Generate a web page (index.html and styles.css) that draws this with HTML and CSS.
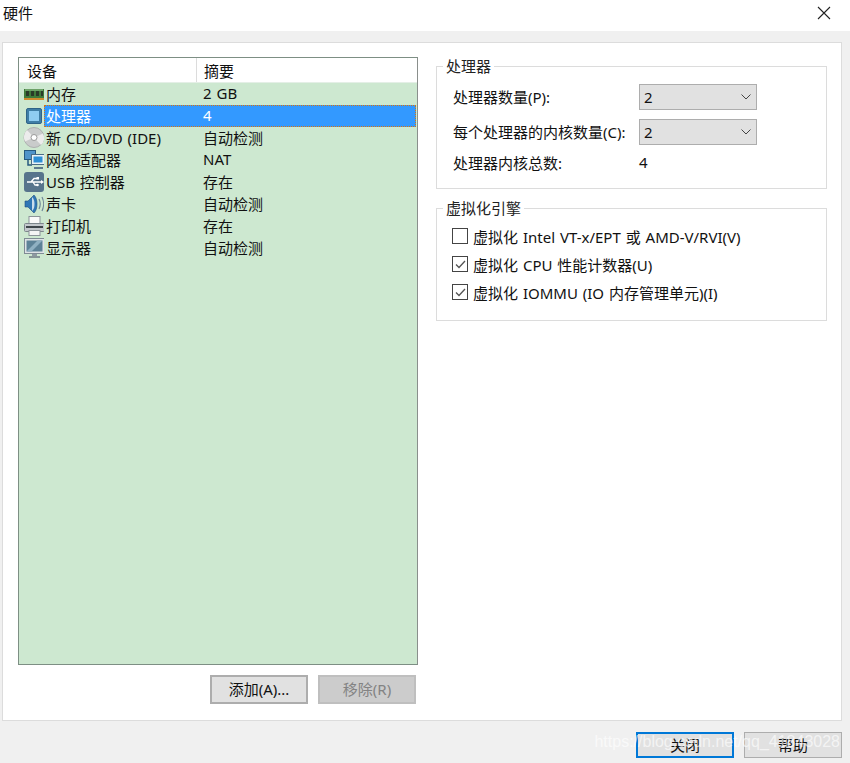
FILE: index.html
```html
<!DOCTYPE html>
<html lang="zh-CN">
<head>
    <meta charset="UTF-8">
    <title>硬件</title>
    <link rel="stylesheet" href="styles.css">
</head>
<body>
    <div class="window">
        <div class="titlebar">
            <span class="title">硬件</span>
            <svg class="close-x" width="14" height="14" viewBox="0 0 14 14"><path d="M1 1l12 12M13 1L1 13" stroke="#222" stroke-width="1.1" fill="none"/></svg>
        </div>

        <div class="content">
            <div class="panel">
                <!-- 左侧设备列表 -->
                <div class="left">
                    <div class="list">
                        <div class="list-head">
                            <div class="col-device">设备</div>
                            <div class="col-summary">摘要</div>
                        </div>
                        <div class="row">
                            <svg class="icon" viewBox="-2 0 24 22"><rect x="2" y="6" width="20" height="9" fill="#3f7a3a"/><path d="M4 8h3v5H4zM9 8h3v5H9zM14 8h3v5h-3zM19 8h2v5h-2z" fill="#2a3a28"/><path d="M3 7h18" stroke="#9cc896"/><rect x="2" y="15" width="20" height="2" fill="#d08a2e"/></svg>
                            <div class="col-device">内存</div>
                            <div class="col-summary">2 GB</div>
                        </div>
                        <div class="row selected">
                            <svg class="icon" viewBox="-2 0 24 22"><rect x="4.500" y="3.500" width="15" height="15" rx="1.500" fill="#3f7ea6" stroke="#2f6488"/><rect x="7" y="6" width="10" height="10" fill="#8fcdf2"/></svg>
                            <div class="sel-area">
                                <div class="col-device">处理器</div>
                                <div class="col-summary">4</div>
                            </div>
                        </div>
                        <div class="row">
                            <svg class="icon" viewBox="-2 0 24 22"><circle cx="12" cy="10.500" r="10" fill="#c9cbcb" stroke="#adafaf"/><path d="M12 10.500L5 3A10 10 0 0 0 3 14.500zM12 10.500l7 7.500A10 10 0 0 0 21 6.500z" fill="#ececec"/><circle cx="12" cy="10.500" r="3" fill="#fff" stroke="#999"/></svg>
                            <div class="col-device">新 CD/DVD (IDE)</div>
                            <div class="col-summary">自动检测</div>
                        </div>
                        <div class="row">
                            <svg class="icon" viewBox="-2 0 24 22"><rect x="2.500" y="1.500" width="11" height="9" fill="#4f93c9" stroke="#27597f"/><path d="M6 11v5h4" stroke="#27597f" fill="none" stroke-width="1.500"/><rect x="9.500" y="5.500" width="13" height="10" fill="#e9f2f7" stroke="#4a6d85"/><rect x="11.500" y="7.500" width="9" height="6" fill="#2d8fd5"/><path d="M12 19h9" stroke="#5b7a8e" stroke-width="2"/></svg>
                            <div class="col-device">网络适配器</div>
                            <div class="col-summary">NAT</div>
                        </div>
                        <div class="row">
                            <svg class="icon" viewBox="-2 0 24 22"><rect x="2" y="1" width="20" height="20" rx="3" fill="#57748c"/><path d="M5 11h14M9 11l3-3.500h3M11 11l2 3h2" stroke="#fff" stroke-width="1.300" fill="none"/><path d="M19 9l3 2-3 2z" fill="#fff"/><rect x="14.500" y="6" width="2.500" height="2.500" fill="#fff"/><circle cx="15.500" cy="14" r="1.300" fill="#fff"/></svg>
                            <div class="col-device">USB 控制器</div>
                            <div class="col-summary">存在</div>
                        </div>
                        <div class="row">
                            <svg class="icon" viewBox="-2 0 24 22"><path d="M3 8h3l6-6c2 2 3 5 3 9s-1 7-3 9l-6-6H3z" fill="#2f76b5" stroke="#1f4f7d" stroke-width=".6"/><path d="M10 4c2 2 2.500 4 2.500 7s-.5 5-2.500 7" fill="#c9dcec"/><path d="M17 6c1.500 3 1.500 7 0 10M20 4c2 4 2 10 0 14" stroke="#6f8799" stroke-width="1.200" fill="none"/></svg>
                            <div class="col-device">声卡</div>
                            <div class="col-summary">自动检测</div>
                        </div>
                        <div class="row">
                            <svg class="icon" viewBox="-2 0 24 22"><rect x="7" y="1.500" width="11" height="7" fill="#fafafa" stroke="#8c9499"/><rect x="2.500" y="8.500" width="20" height="8" rx="1" fill="#c3c8cc" stroke="#7d868c"/><rect x="4" y="11" width="17" height="2" fill="#3f464b"/><rect x="7" y="15.500" width="11" height="5" fill="#f4f4f4" stroke="#8c9499"/></svg>
                            <div class="col-device">打印机</div>
                            <div class="col-summary">存在</div>
                        </div>
                        <div class="row">
                            <svg class="icon" viewBox="-2 0 24 22"><rect x="2.500" y="1.500" width="20" height="15" fill="#dfe3e6" stroke="#7f8b94"/><path d="M4.500 3.500h16v11h-16z" fill="#5d8297"/><path d="M4.500 14.500l11-11h5l-11 11z" fill="#8fb0c2"/><path d="M10 17h5v2h-5z" fill="#8f9aa2"/><path d="M7 20h11" stroke="#6f7b84" stroke-width="1.500"/></svg>
                            <div class="col-device">显示器</div>
                            <div class="col-summary">自动检测</div>
                        </div>
                    </div>
                    <div class="list-buttons">
                        <div class="btn">添加(A)...</div>
                        <div class="btn btn-disabled">移除(R)</div>
                    </div>
                </div>

                <!-- 右侧设置 -->
                <div class="right">
                    <fieldset class="group group-cpu">
                        <legend>处理器</legend>
                        <div class="group-body">
                            <div class="field">
                                <span class="field-label">处理器数量(P):</span>
                                <div class="combo">2
                                    <svg width="10" height="6" viewBox="0 0 10 6"><path d="M.5.5L5 5 9.500.5" stroke="#444" fill="none"/></svg>
                                </div>
                            </div>
                            <div class="field">
                                <span class="field-label">每个处理器的内核数量(C):</span>
                                <div class="combo">2
                                    <svg width="10" height="6" viewBox="0 0 10 6"><path d="M.5.5L5 5 9.500.5" stroke="#444" fill="none"/></svg>
                                </div>
                            </div>
                            <div class="field">
                                <span class="field-label">处理器内核总数:</span>
                                <span class="total">4</span>
                            </div>
                        </div>
                    </fieldset>

                    <fieldset class="group group-virt">
                        <legend>虚拟化引擎</legend>
                        <div class="group-body">
                            <div class="check">
                                <span class="box"></span>
                                <span>虚拟化 Intel VT-x/EPT 或 AMD-V/RVI(V)</span>
                            </div>
                            <div class="check">
                                <span class="box"><svg width="13" height="13" viewBox="0 0 13 13"><path d="M2 6.500L5 9.500 11 3" stroke="#555" stroke-width="1.300" fill="none"/></svg></span>
                                <span>虚拟化 CPU 性能计数器(U)</span>
                            </div>
                            <div class="check">
                                <span class="box"><svg width="13" height="13" viewBox="0 0 13 13"><path d="M2 6.500L5 9.500 11 3" stroke="#555" stroke-width="1.300" fill="none"/></svg></span>
                                <span>虚拟化 IOMMU (IO 内存管理单元)(I)</span>
                            </div>
                        </div>
                    </fieldset>
                </div>
            </div>

            <div class="footer">
                <div class="btn btn-foot btn-default">关闭</div>
                <div class="btn btn-foot">帮助</div>
            </div>
        </div>
        <div class="watermark">https://blog.csdn.net/qq_41843028</div>
    </div>
</body>
</html>
```

FILE: styles.css
```css
* {
    box-sizing: border-box;
}

body {
    margin: 0;
    background-color: #fff;
    color: #111;
    font-family: "Noto Sans", "Noto Sans CJK SC", sans-serif;
    font-size: 15px;
    word-spacing: 1px;
}

.window {
    position: relative;
    display: flex;
    flex-direction: column;
    width: 850px;
    height: 763px;
    overflow: hidden;
}

.titlebar {
    display: flex;
    align-items: center;
    justify-content: space-between;
    height: 31px;
    padding: 0 19px 6px 3px;
    background-color: #fff;
}

.content {
    flex: 1;
    display: flex;
    flex-direction: column;
    padding: 11px 8px 0 2px;
    background-color: #f0f0f0;
}

.panel {
    display: flex;
    height: 679px;
    padding: 14px 14px 0 15px;
    background-color: #fff;
    border: 1px solid #dcdcdc;
}

/* 设备列表 */
.left {
    width: 401px;
    margin-right: 18px;
}

.list {
    width: 400px;
    height: 608px;
    background-color: #cde8d0;
    border: 1px solid #7d8f84;
    border-right-color: #8a8f8c;
}

.list-head {
    display: flex;
    align-items: center;
    height: 25px;
    background-color: #fff;
    border-bottom: 1px solid #e4efe6;
}

.list-head .col-device {
    display: flex;
    align-items: center;
    width: 178px;
    height: 100%;
    padding-left: 8px;
    border-right: 1px solid #dcdcdc;
}

.list-head .col-summary {
    padding-left: 7px;
}

.row {
    display: flex;
    align-items: center;
    height: 22px;
}

.icon {
    flex: none;
    width: 24px;
    height: 22px;
    margin-left: 1px;
}

.row .col-device {
    width: 159px;
    padding: 0 0 2px 2px;
}

.row .col-summary {
    padding-bottom: 2px;
}

.selected {
    color: #fff;
}

.sel-area {
    display: flex;
    align-items: center;
    width: 372px;
    height: 22px;
    background-color: #3399ff;
    border: 1px dotted #d9750f;
}

.sel-area .col-device {
    width: 158px;
    padding-left: 1px;
}

.list-buttons {
    display: flex;
    justify-content: flex-end;
    gap: 10px;
    margin-top: 10px;
    padding-right: 2px;
}

.btn {
    display: flex;
    align-items: center;
    justify-content: center;
    width: 98px;
    height: 29px;
    padding-bottom: 2px;
    background-color: #e1e1e1;
    border: 2px solid #adadad;
    outline: 1px solid #fff;
}

.btn-disabled {
    background-color: #cccccc;
    border-color: #bfbfbf;
    color: #838383;
}

/* 右侧分组 */
.right {
    width: 392px;
}

.group {
    margin: 0;
    padding: 0;
    border: 1px solid #dcdcdc;
    min-width: 0;
}

.group legend {
    margin-left: 6px;
    padding: 0 3px;
    line-height: 18px;
    color: #222;
}

.group-cpu {
    height: 132px;
}

.group-cpu .group-body {
    padding: 9px 0 0 16px;
}

.group-virt {
    height: 122px;
    margin-top: 10px;
}

.group-virt .group-body {
    padding: 5px 0 0 15px;
}

.field {
    display: flex;
    align-items: center;
    height: 26px;
    margin-bottom: 9px;
}

.field:last-child {
    margin-bottom: 0;
    height: 18px;
}

.field-label {
    width: 186px;
    flex: none;
    padding-bottom: 2px;
}

.total {
    padding-bottom: 2px;
}

.combo {
    display: flex;
    align-items: center;
    justify-content: space-between;
    width: 118px;
    height: 26px;
    padding: 0 5px 0 4px;
    background-color: #e1e1e1;
    border: 1px solid #adadad;
}

.check {
    display: flex;
    align-items: center;
    gap: 5px;
    height: 28px;
}

.box {
    display: flex;
    align-items: center;
    justify-content: center;
    width: 16px;
    height: 16px;
    border: 1px solid #444;
    background-color: #fff;
}

/* 底部按钮 */
.footer {
    display: flex;
    justify-content: flex-end;
    gap: 10px;
    padding-top: 11px;
}

.btn-foot {
    height: 26px;
    outline: none;
    border-width: 1px;
}

.btn-default {
    border: 2px solid #0078d7;
}

.watermark {
    position: absolute;
    right: 10px;
    top: 733px;
    font-family: "Liberation Sans", sans-serif;
    font-size: 16px;
    word-spacing: 0;
    color: rgba(255, 255, 255, 0.65);
    white-space: nowrap;
}
```
